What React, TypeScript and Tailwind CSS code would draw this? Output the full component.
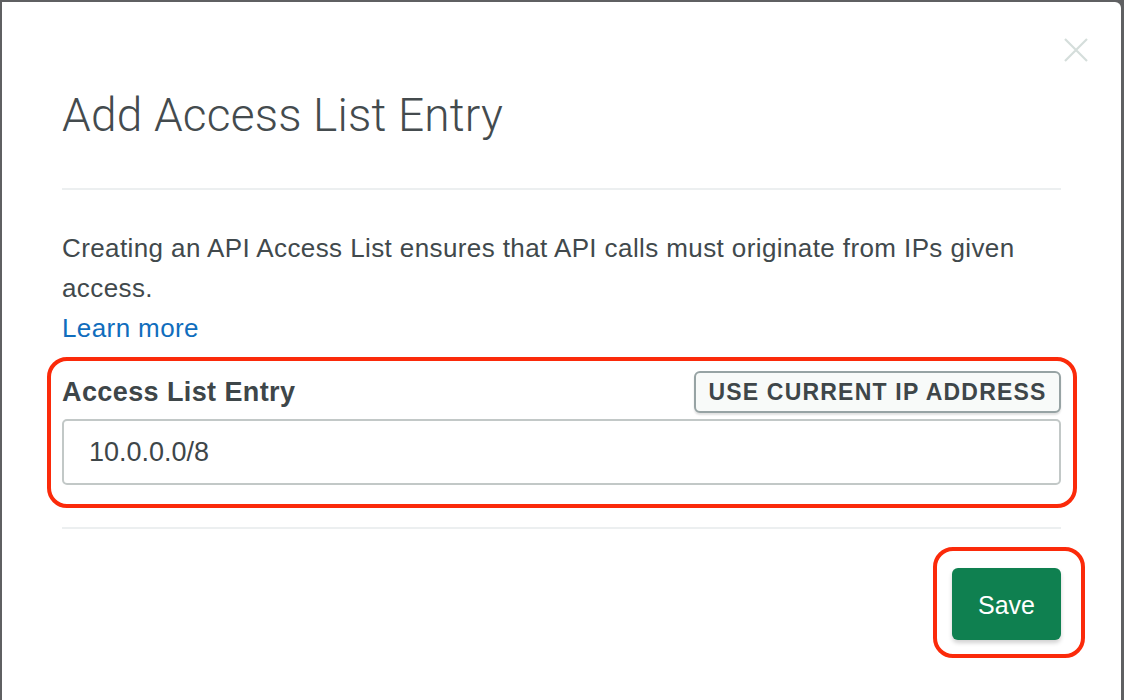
import React from 'react';

const sans = { fontFamily: '"Liberation Sans", Arial, sans-serif' };

const App: React.FC = () => {
  return (
    <div className="min-h-[700px] h-[700px] overflow-hidden bg-[#5f6062] pt-[2px] pl-[2px] pr-[3px]" style={sans}>
      <div className="relative h-[698px] bg-white rounded-tr-[6px] pl-[60px] pr-[60px] text-[#41494c]">
        {/* Close */}
        <button className="absolute top-[36px] right-[33px] h-[24px] w-[24px]" aria-label="Close">
          <svg viewBox="0 0 24 24" className="h-[24px] w-[24px]" fill="none" stroke="#d5dedb" strokeWidth="2.2">
            <path d="M1 1 L23 23 M23 1 L1 23" />
          </svg>
        </button>

        {/* Title */}
        <h2
          className="pt-[86px] text-[46px] leading-[54px] font-light tracking-[0.2px] text-[#444b4e]"
          style={{ fontFamily: 'Roboto, "Liberation Sans", sans-serif' }}
        >
          Add Access List Entry
        </h2>
        <div className="mt-[46px] border-t-2 border-[#eceff0]" />

        {/* Description */}
        <div className="mt-[38px] text-[26px] leading-[40px] tracking-[0.4px]">
          <p>Creating an API Access List ensures that API calls must originate from IPs given access.</p>
          <a href="#" className="text-[#106dbd]">Learn more</a>
        </div>

        {/* Entry field */}
        <div className="mt-[9px] -ml-[15px] -mr-[16px] border-4 border-[#fb2a0a] rounded-[20px] pl-[11px] pr-[12px] pt-[10px] pb-[19px]">
          <div className="flex items-center justify-between">
            <label className="text-[27px] leading-[32px] font-bold tracking-[0.4px] text-[#3e4649]">Access List Entry</label>
            <button className="h-[42px] w-[367px] rounded-[6px] border-2 border-[#97a3a4] bg-[#f8faf9] shadow-[0_2px_2px_rgba(0,0,0,0.12)] text-[23px] font-bold uppercase tracking-[1.2px] text-[#3e4649]">
              Use current IP address
            </button>
          </div>
          <input
            readOnly
            value="10.0.0.0/8"
            className="mt-[6px] block w-full h-[66px] rounded-[5px] border-2 border-[#c2c8c7] pl-[25px] text-[27px] text-[#3e4649] outline-none"
            style={sans}
          />
        </div>
        <div className="mt-[19px] border-t-2 border-[#eceff0]" />

        {/* Footer */}
        <div className="flex justify-end">
          <div className="mt-[18px] -mr-[24px] border-4 border-[#fb2a0a] rounded-[20px] pl-[15px] pr-[20px] pt-[17px] pb-[14px]">
            <button className="h-[72px] w-[109px] pt-[3px] rounded-[6px] bg-[#0f8050] text-white text-[25px] shadow-[0_3px_4px_rgba(0,0,0,0.18)]">
              Save
            </button>
          </div>
        </div>
      </div>
    </div>
  );
};

export default App;
